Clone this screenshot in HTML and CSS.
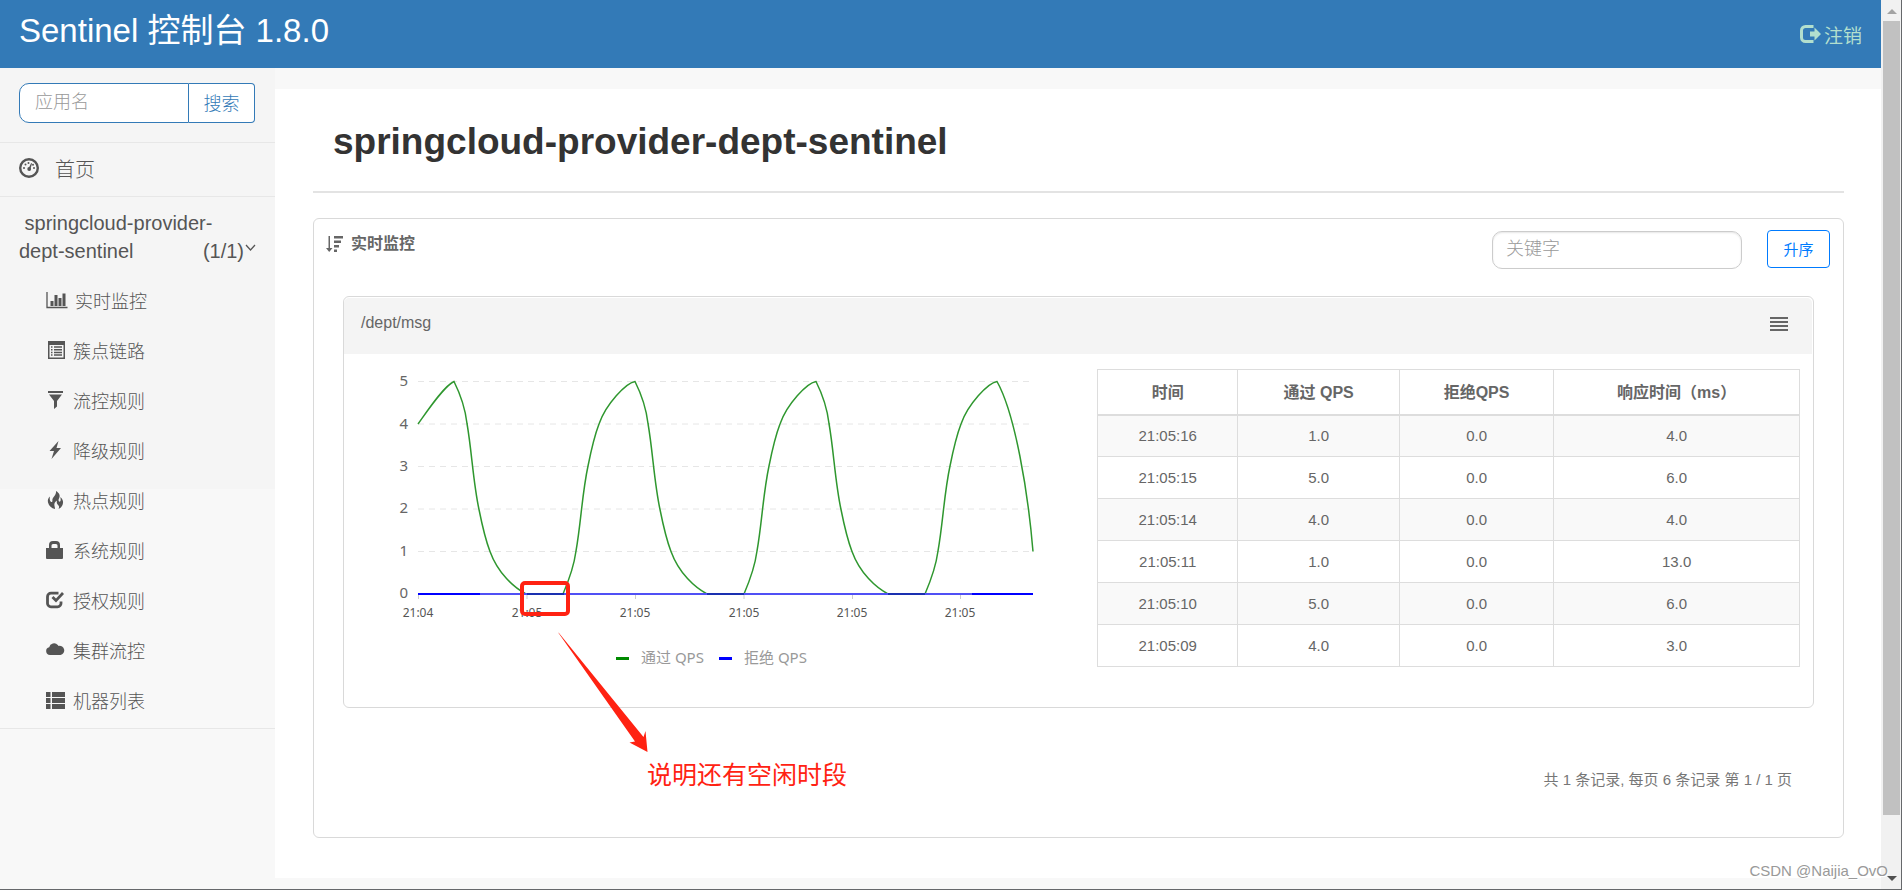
FILE: index.html
```html
<!DOCTYPE html>
<html lang="zh-CN">
<head>
<meta charset="utf-8">
<title>Sentinel 控制台</title>
<link rel="stylesheet" href="styles.css">
</head>
<body>
<div class="window">
  <div class="app">
    <header class="topbar">
      <h1 class="brand">Sentinel 控制台 1.8.0</h1>
      <a class="logout" href="#">
        <svg class="logout-icon" viewBox="0 0 21 18" aria-hidden="true"><path d="M13.500 1.500H5.500a4 4 0 0 0-4 4v7a4 4 0 0 0 4 4h8" fill="none" stroke="currentColor" stroke-width="3"/><path d="M10 6.500h4.500V2.500L21 9l-6.500 6.500v-4H10z" fill="currentColor"/></svg>
        <span>注销</span>
      </a>
    </header>

    <div class="columns">
      <aside class="sidebar">
        <form class="search">
          <input class="search-input" type="text" placeholder="应用名" aria-label="应用名">
          <button class="search-button" type="button">搜索</button>
        </form>
        <a class="home" href="#">
          <svg class="home-icon" viewBox="0 0 20 20" aria-hidden="true"><circle cx="10" cy="10" r="8.800" fill="none" stroke="currentColor" stroke-width="2.400"/><path d="M9 11.500l3.200-6.500.8.400-2 7z" fill="currentColor"/><g fill="currentColor"><circle cx="10.200" cy="11" r="1.900"/><circle cx="5" cy="10" r="1"/><circle cx="6.500" cy="6.500" r="1"/><circle cx="9.500" cy="5" r="1"/><circle cx="14" cy="6.800" r="1"/><circle cx="15" cy="10" r="1"/></g></svg>
          <span>首页</span>
        </a>
        <a class="dept" href="#"><span>&nbsp;springcloud-provider-</span><span>dept-sentinel</span> <span class="dept-count">(1/1)<svg class="chevron" viewBox="0 0 11 8" aria-hidden="true"><path d="M1 1l4.500 5L10 1" fill="none" stroke="currentColor" stroke-width="1.300"/></svg></span></a>
        <nav class="menu">
          <a class="menu-item" href="#"><svg class="menu-icon wide" viewBox="0 0 21 18" aria-hidden="true"><path d="M.5 1v15.500h20.500" fill="none" stroke="currentColor" stroke-width="1.300"/><path d="M4 10h3v5H4zM8 4h3v11H8zM12 7h3v8h-3zM16 2.500h3V15h-3z" fill="currentColor"/></svg>实时监控</a>
          <a class="menu-item" href="#"><svg class="menu-icon" viewBox="0 0 20 18" aria-hidden="true"><path d="M2 0h17v18H2zM3.500 4v12.500h14V4z" fill="currentColor" fill-rule="evenodd"/><path d="M5 6h1.500M5 8.700h1.500M5 11.400h1.500M5 14.100h1.500M8 6h8M8 8.700h8M8 11.400h8M8 14.100h8" stroke="currentColor" stroke-width="1.500"/></svg>簇点链路</a>
          <a class="menu-item" href="#"><svg class="menu-icon" viewBox="0 0 20 18" aria-hidden="true"><path d="M2 0h15v2H2zM3 3.500h13L11 10v5.500L8 18v-8z" fill="currentColor"/></svg>流控规则</a>
          <a class="menu-item" href="#"><svg class="menu-icon" viewBox="0 0 20 18" aria-hidden="true"><path d="M12.500 0L3.500 10H8L5.500 18l9.500-11h-4.500z" fill="currentColor"/></svg>降级规则</a>
          <a class="menu-item" href="#"><svg class="menu-icon" viewBox="0 0 20 18" aria-hidden="true"><path d="M10 0c3.500 2 4.500 5 3 7.500-.8 1.500-.5 3 .5 3.200 1.500 0 1.300-2.500.8-4.700C16.500 8 18 10.500 16.500 14c-.8 2-2.200 3.200-4 4 .8-1.500.8-2.600 0-3.500-1.200-1.200-2.300-2.700-1.500-5C8.500 11 8 13 8.500 15c.3 1 .5 2 .5 3-3.500-.7-6-3-7-6.500C1.500 9 2 7 4 5.500c-.5 2-.3 4 .8 5.200.8.700 1.800 0 1.600-1.300C6 6 10.500 5 10 0z" fill="currentColor"/></svg>热点规则</a>
          <a class="menu-item" href="#"><svg class="menu-icon" viewBox="0 0 20 18" aria-hidden="true"><path d="M0 7h3V4a4 4 0 0 1 4-4h3a4 4 0 0 1 4 4v3h3v10a1 1 0 0 1-1 1H1a1 1 0 0 1-1-1zM5.500 7h6V4.500A1.500 1.500 0 0 0 10 3H7a1.500 1.500 0 0 0-1.500 1.500z" fill="currentColor" fill-rule="evenodd"/></svg>系统规则</a>
          <a class="menu-item" href="#"><svg class="menu-icon" viewBox="0 0 20 18" aria-hidden="true"><path d="M12.500 2.200H5a3.500 3.500 0 0 0-3.500 3.500V12A3.500 3.500 0 0 0 5 15.800h6.500A3.500 3.500 0 0 0 15 12v-1.500" fill="none" stroke="currentColor" stroke-width="2.800"/><path d="M5.500 7l2-2L10 7.500 16 1l2 2-8 8.500z" fill="currentColor"/></svg>授权规则</a>
          <a class="menu-item" href="#"><svg class="menu-icon" viewBox="0 0 20 18" aria-hidden="true"><path d="M4 14a3.900 3.900 0 0 1-.8-7.700A5 5 0 0 1 11.800 4a5 5 0 0 1 .8 1A4.600 4.600 0 1 1 14.500 14z" fill="currentColor"/></svg>集群流控</a>
          <a class="menu-item" href="#"><svg class="menu-icon" viewBox="0 0 20 18" aria-hidden="true"><path d="M0 1h4.500v5H0zM6 1h13v5H6zM0 7h4.500v5H0zM6 7h13v5H6zM0 13h4.500v5H0zM6 13h13v5H6z" fill="currentColor"/></svg>机器列表</a>
        </nav>
      </aside>

      <main class="content">
        <h2 class="page-title">springcloud-provider-dept-sentinel</h2>
        <section class="panel">
          <div class="toolbar">
            <strong class="toolbar-title">
              <svg class="sort-icon" viewBox="0 0 17 16" aria-hidden="true"><path d="M2.500 0h1.500v12H6.500L3.200 16 0 12h2.500zM8 0h9v2.500H8zM8 4.500h7V7H8zM8 9h5v2.500H8zM8 13.500h3V16H8z" fill="currentColor"/></svg>
              <span>实时监控</span>
            </strong>
            <input class="keyword" type="text" placeholder="关键字" aria-label="关键字">
            <button class="sort-button" type="button">升序</button>
          </div>

          <article class="card">
            <div class="card-header">
              <span>/dept/msg</span>
              <svg class="bars-icon" viewBox="0 0 18 14" aria-hidden="true"><path d="M0 1h18M0 5h18M0 9h18M0 13h18" stroke="currentColor" stroke-width="2"/></svg>
            </div>
            <div class="card-body">
              <svg class="chart" viewBox="0 0 740 340" role="img" aria-label="QPS">
                <path class="grid-line" d="M74 26.500H689M74 69H689M74 111.500H689M74 154H689M74 196.500H689"/>
                <g class="y-label">
                  <text x="64" y="31">5</text><text x="64" y="74">4</text><text x="64" y="116">3</text>
                  <text x="64" y="158">2</text><text x="64" y="201">1</text><text x="64" y="243">0</text>
                </g>
                <path class="tick" d="M74.500 239v5M183 239v5M291.500 239v5M400 239v5M508.500 239v5M616.500 239v5"/>
                <g class="x-label">
                  <text x="74" y="262">21:04</text><text x="183" y="262">21:05</text><text x="291" y="262">21:05</text>
                  <text x="400" y="262">21:05</text><text x="508" y="262">21:05</text><text x="616" y="262">21:05</text>
                </g>
                <path class="passed" d="M74 69c10-14 26-38 36-42.500
                  c6 12 11 25 13 42c5 29 6 58 12 86c3 15 6 29 11 42c8 22 24 36 36 42.500h37
                  c6-14 11-28 13-43c5-28 6-57 12-85c3-15 6-29 11-42c7-20 27-41 36-42.500
                  c6 12 11 25 13 42c5 29 6 58 12 86c3 15 6 29 11 42c8 22 24 36 36 42.500h37
                  c6-14 11-28 13-43c5-28 6-57 12-85c3-15 6-29 11-42c7-20 27-41 36-42.500
                  c6 12 11 25 13 42c5 29 6 58 12 86c3 15 6 29 11 42c8 22 24 36 36 42.500h37
                  c6-14 11-28 13-43c5-28 6-57 12-85c3-15 6-29 11-42c7-20 27-41 36-42.500
                  c18 32 31 110 36 170"/>
                <path class="blocked soft" d="M136 239H628"/>
                <path class="blocked" d="M74 239H136M628 239H689"/>
                <path class="blocked idle" d="M183 239h37M363 239h37M544 239h37"/>
                <path class="key-passed" d="M272 303.500h13"/>
                <path class="key-blocked" d="M375 303.500h13"/>
                <g class="legend"><text x="297" y="308">通过 QPS</text><text x="400" y="308">拒绝 QPS</text></g>
              </svg>
              <table class="metrics">
                <colgroup><col class="col-time"><col class="col-pass"><col class="col-block"><col class="col-rt"></colgroup>
                <thead><tr><th>时间</th><th>通过 QPS</th><th>拒绝QPS</th><th>响应时间（ms）</th></tr></thead>
                <tbody>
                  <tr><td>21:05:16</td><td>1.0</td><td>0.0</td><td>4.0</td></tr>
                  <tr><td>21:05:15</td><td>5.0</td><td>0.0</td><td>6.0</td></tr>
                  <tr><td>21:05:14</td><td>4.0</td><td>0.0</td><td>4.0</td></tr>
                  <tr><td>21:05:11</td><td>1.0</td><td>0.0</td><td>13.0</td></tr>
                  <tr><td>21:05:10</td><td>5.0</td><td>0.0</td><td>6.0</td></tr>
                  <tr><td>21:05:09</td><td>4.0</td><td>0.0</td><td>3.0</td></tr>
                </tbody>
              </table>
            </div>
            <div class="note">
              <svg class="note-mark" viewBox="0 0 130 172" aria-hidden="true"><rect x="2" y="2" width="46" height="31" rx="3" fill="none" stroke="currentColor" stroke-width="4"/><path d="M38.500 51.500l85 104.500 2-6L127.500 171 109.500 161.500l5.500-1L38.500 52z" fill="currentColor"/></svg>
              <span class="note-text">说明还有空闲时段</span>
            </div>
          </article>

          <p class="pager">共 1 条记录, 每页 6 条记录 第 1 / 1 页</p>
        </section>
      </main>
    </div>
  </div>

  <div class="scrollbar" aria-hidden="true">
    <span class="arrow-up"></span>
    <span class="thumb"></span>
    <span class="arrow-down"></span>
  </div>
  <span class="watermark">CSDN @Naijia_OvO</span>
</div>
</body>
</html>
```
FILE: styles.css
```css
* {
  box-sizing: border-box;
}

body {
  margin: 0;
  background: #f8f8f8;
  color: #555;
  font-family: "Liberation Sans", "Noto Sans CJK SC", sans-serif;
  font-size: 16px;
}

a {
  color: inherit;
  text-decoration: none;
}

input,
button {
  font-family: inherit;
}

svg {
  flex: none;
}

.window {
  position: relative;
  display: flex;
  min-height: 100vh;
  border-right: 1px solid #66686b;
  border-bottom: 1px solid #66686b;
}

.app {
  flex: 1;
  min-width: 0;
  display: flex;
  flex-direction: column;
}

/* Top bar */

.topbar {
  display: flex;
  justify-content: space-between;
  height: 68px;
  padding: 0 19px;
  background: #337ab7;
}

.brand {
  margin: 0;
  color: #fff;
  font-size: 33px;
  font-weight: 400;
  line-height: 62px;
}

.logout {
  display: flex;
  align-items: center;
  gap: 3px;
  color: #b2dfce;
  font-size: 19px;
}

.logout-icon {
  width: 21px;
  height: 18px;
}

.columns {
  flex: 1;
  display: flex;
}

/* Sidebar */

.sidebar {
  flex: none;
  width: 275px;
  background: linear-gradient(#f5f5f5 421px, #f8f8f8 421px);
  font-weight: 300;
}

.search {
  display: flex;
  height: 74px;
  padding: 15px 20px 19px 19px;
}

.search-input {
  flex: 1;
  min-width: 0;
  padding: 0 15px 2px;
  border: 1px solid #337ab7;
  border-radius: 10px 0 0 10px;
  background: #fff;
  color: #555;
  font-size: 18px;
  font-weight: 300;
}

.search-button {
  width: 66px;
  padding: 0 0 2px;
  border: 1px solid #337ab7;
  border-left: 0;
  border-radius: 0 4px 4px 0;
  background: #fff;
  color: #337ab7;
  font-size: 18px;
  font-weight: 300;
}

::placeholder {
  color: #999;
  opacity: 1;
}

.home {
  display: flex;
  align-items: center;
  gap: 16px;
  height: 55px;
  padding: 0 19px 2px;
  border-top: 1px solid #e7e7e7;
  border-bottom: 1px solid #e7e7e7;
  font-size: 20px;
}

.home-icon {
  width: 20px;
  height: 20px;
  margin-bottom: 2px;
}

.dept {
  display: block;
  padding: 12px 19px 11px;
  font-size: 20px;
  line-height: 28px;
}

.dept-count {
  float: right;
}

.chevron {
  width: 11px;
  height: 8px;
  margin-left: 1px;
  vertical-align: 6px;
}

.menu {
  padding-bottom: 2px;
  border-bottom: 1px solid #e7e7e7;
}

.menu-item {
  display: flex;
  align-items: center;
  gap: 7px;
  height: 50px;
  padding: 0 0 2px 46px;
  font-size: 18px;
}

.menu-icon {
  width: 20px;
  height: 18px;
}

.menu-icon.wide {
  width: 22px;
}

/* Content */

.content {
  flex: 1;
  min-width: 0;
  margin: 21px 0 11px;
  padding: 0 37px 40px 38px;
  background: #fff;
}

.page-title {
  margin: 0 0 25px;
  padding: 4px 20px 0;
  border-bottom: 2px solid #e3e3e3;
  color: #333;
  font-size: 37px;
  font-weight: 700;
  line-height: 98px;
}

.panel {
  padding: 11px 13px 42px 12px;
  border: 1px solid #d9d9d9;
  border-radius: 6px;
  color: #666;
}

.toolbar {
  display: flex;
  align-items: center;
  gap: 25px;
  height: 38px;
}

.toolbar-title {
  flex: 1;
  align-self: flex-start;
  display: flex;
  align-items: center;
  gap: 8px;
  font-size: 16px;
  line-height: 28px;
}

.sort-icon {
  width: 17px;
  height: 16px;
}

.keyword {
  width: 250px;
  height: 38px;
  margin-top: 2px;
  padding: 0 13px 2px;
  border: 1px solid #ccc;
  border-radius: 10px;
  box-shadow: inset 0 1px 2px rgba(0, 0, 0, 0.1);
  color: #555;
  font-size: 18px;
  font-weight: 300;
}

.sort-button {
  width: 63px;
  height: 38px;
  padding: 0 0 2px;
  border: 1px solid #007bff;
  border-radius: 4px;
  background: #fff;
  color: #007bff;
  font-size: 15px;
}

.card {
  position: relative;
  margin: 28px 16px 0 17px;
  border: 1px solid #d9d9d9;
  border-radius: 6px;
}

.card-header {
  display: flex;
  align-items: center;
  justify-content: space-between;
  height: 56px;
  margin: 1px 1px 0 0;
  padding: 0 24px 6px 17px;
  border-radius: 5px 5px 0 0;
  background: #f4f4f4;
}

.bars-icon {
  width: 18px;
  height: 14px;
  margin-top: 2px;
}

.card-body {
  display: grid;
  grid-template-columns: 740fr 703fr;
  gap: 13px;
  align-items: start;
  padding: 1px 13px 12px 0;
}

/* Chart */

.chart {
  display: block;
  width: 100%;
  font-family: "Noto Sans", "Noto Sans CJK SC", sans-serif;
}

.chart path {
  fill: none;
}

.grid-line {
  stroke: #e6e6e6;
  stroke-dasharray: 6 5;
}

.tick {
  stroke: #ccc;
}

.y-label {
  fill: #666;
  font-size: 15px;
  text-anchor: end;
}

.x-label {
  fill: #555;
  font-size: 12px;
  text-anchor: middle;
}

.blocked {
  stroke: #00f;
  stroke-width: 2;
}

.blocked.soft {
  stroke: #5050f5;
}

.blocked.idle {
  stroke: #1a30b0;
}

.chart .passed {
  stroke: #2f972f;
  stroke-width: 1.5;
}

.key-passed {
  stroke: #008a00;
  stroke-width: 3;
}

.key-blocked {
  stroke: #00f;
  stroke-width: 3;
}

.legend {
  fill: #999;
  font-size: 15px;
}

/* Metrics table */

.metrics {
  width: 100%;
  margin-top: 14px;
  border-collapse: collapse;
  table-layout: fixed;
  text-align: center;
}

.col-time {
  width: 20%;
}

.col-pass {
  width: 23%;
}

.col-block {
  width: 22%;
}

.metrics th,
.metrics td {
  height: 42px;
  padding: 0;
  border: 1px solid #ddd;
  font-size: 15px;
}

.metrics th {
  height: 45px;
  padding-bottom: 2px;
  border-bottom-width: 2px;
  font-size: 16px;
}

.metrics tbody tr:nth-child(odd) {
  background: #f9f9f9;
}

/* Annotation drawn over the card */

.note {
  position: absolute;
  top: 284px;
  left: 176px;
  color: #ff2212;
}

.note-mark {
  display: block;
  width: 130px;
  height: 172px;
}

.note-text {
  display: block;
  margin: 4px 0 0 127px;
  font-size: 25px;
  line-height: 36px;
  white-space: nowrap;
}

.pager {
  margin: 57px 38px 0 0;
  color: #777;
  font-size: 15px;
  line-height: 30px;
  text-align: right;
}

/* Scrollbar and watermark */

.scrollbar {
  flex: none;
  display: flex;
  flex-direction: column;
  align-items: center;
  width: 20px;
  padding: 9px 0 8px 1px;
  background: #f1f1f1;
}

.arrow-up,
.arrow-down {
  border: 5px solid transparent;
}

.arrow-up {
  border-top: 0;
  border-bottom-color: #a3a3a3;
}

.arrow-down {
  margin-top: auto;
  border-bottom: 0;
  border-top-color: #505050;
}

.thumb {
  flex: 0 0 91%;
  width: 17px;
  margin-top: 7px;
  background: #c1c1c1;
}

.watermark {
  position: absolute;
  right: 13px;
  bottom: 7px;
  color: #999;
  font-size: 15px;
  line-height: 22px;
  text-shadow: 1px 1px 0 #fff;
}
```
